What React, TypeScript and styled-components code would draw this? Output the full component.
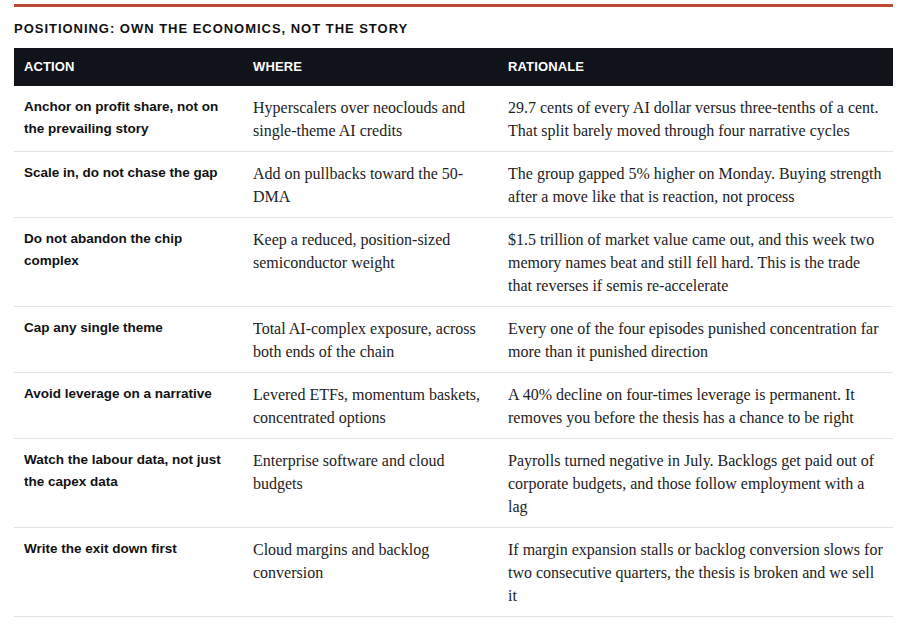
import React from "react";
import styled, { createGlobalStyle } from "styled-components";

const Global = createGlobalStyle`
  html, body { margin: 0; padding: 0; background: #fff; }
`;

const Page = styled.div`
  padding: 4px 25px 0 14px;
`;

const Section = styled.section`
  border-top: 3px solid #bf4a33;
`;

const Title = styled.h2`
  margin: 0;
  padding: 14px 0 11px;
  font-family: "Liberation Sans", Arial, sans-serif;
  font-weight: 700;
  font-size: 13px;
  line-height: 16px;
  letter-spacing: 0.075em;
  color: #111;
`;

const Table = styled.table`
  width: 100%;
  border-collapse: collapse;
  table-layout: fixed;
`;

const Th = styled.th`
  background: #11131a;
  color: #fff;
  text-align: left;
  font-family: "Liberation Sans", Arial, sans-serif;
  font-weight: 700;
  font-size: 13px;
  line-height: 18px;
  padding: 10px 10px;
  letter-spacing: 0.01em;
`;

const Row = styled.tr`
  border-bottom: 1px solid #e3e3e3;
`;

const ActionCell = styled.td`
  vertical-align: top;
  padding: 10px 10px 9px;
  font-family: "Liberation Sans", Arial, sans-serif;
  font-weight: 700;
  font-size: 13.5px;
  line-height: 22px;
  color: #111;
`;

const TextCell = styled.td`
  vertical-align: top;
  padding: 10px 10px 9px;
  font-family: Georgia, "Liberation Serif", serif;
  font-size: 16px;
  line-height: 23px;
  color: #222;
`;

const rows: [string, string, string][] = [
  [
    "Anchor on profit share, not on the prevailing story",
    "Hyperscalers over neoclouds and single-theme AI credits",
    "29.7 cents of every AI dollar versus three-tenths of a cent. That split barely moved through four narrative cycles",
  ],
  [
    "Scale in, do not chase the gap",
    "Add on pullbacks toward the 50-DMA",
    "The group gapped 5% higher on Monday. Buying strength after a move like that is reaction, not process",
  ],
  [
    "Do not abandon the chip complex",
    "Keep a reduced, position-sized semiconductor weight",
    "$1.5 trillion of market value came out, and this week two memory names beat and still fell hard. This is the trade that reverses if semis re-accelerate",
  ],
  [
    "Cap any single theme",
    "Total AI-complex exposure, across both ends of the chain",
    "Every one of the four episodes punished concentration far more than it punished direction",
  ],
  [
    "Avoid leverage on a narrative",
    "Levered ETFs, momentum baskets, concentrated options",
    "A 40% decline on four-times leverage is permanent. It removes you before the thesis has a chance to be right",
  ],
  [
    "Watch the labour data, not just the capex data",
    "Enterprise software and cloud budgets",
    "Payrolls turned negative in July. Backlogs get paid out of corporate budgets, and those follow employment with a lag",
  ],
  [
    "Write the exit down first",
    "Cloud margins and backlog conversion",
    "If margin expansion stalls or backlog conversion slows for two consecutive quarters, the thesis is broken and we sell it",
  ],
];

export default function App() {
  return (
    <Page>
      <Global />
      <Section>
        <Title>POSITIONING: OWN THE ECONOMICS, NOT THE STORY</Title>
        <Table>
          <colgroup>
            <col style={{ width: 229 }} />
            <col style={{ width: 255 }} />
            <col style={{ width: 395 }} />
          </colgroup>
          <thead>
            <tr>
              <Th>ACTION</Th>
              <Th>WHERE</Th>
              <Th>RATIONALE</Th>
            </tr>
          </thead>
          <tbody>
            {rows.map(([a, w, r]) => (
              <Row key={a}>
                <ActionCell>{a}</ActionCell>
                <TextCell>{w}</TextCell>
                <TextCell>{r}</TextCell>
              </Row>
            ))}
          </tbody>
        </Table>
      </Section>
    </Page>
  );
}
